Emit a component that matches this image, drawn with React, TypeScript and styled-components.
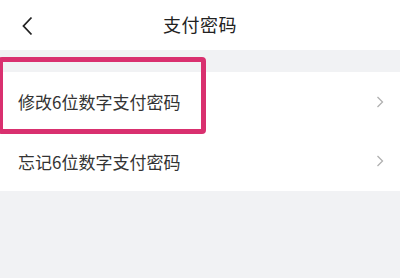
import React from "react";
import styled, { createGlobalStyle } from "styled-components";

const Global = createGlobalStyle`
  html, body { margin: 0; padding: 0; background: #f1f2f4; }
  body { font-family: "Noto Sans CJK SC", "Noto Sans", sans-serif; }
`;

const Page = styled.div`
  position: relative;
  width: 400px;
  height: 278px;
  background: #f1f2f4;
  overflow: hidden;
`;

const Header = styled.div`
  height: 50px;
  background: #fff;
  display: flex;
  align-items: center;
  justify-content: center;
  position: relative;
`;

const Back = styled.div`
  position: absolute;
  left: 22px;
  top: 16px;
  width: 11px;
  height: 20px;
  display: flex;
`;

const Title = styled.div`
  font-size: 18px;
  color: #222;
  letter-spacing: 0.5px;
  margin-top: -2px;
`;

const List = styled.div`
  margin-top: 22px;
  background: #fff;
  display: flex;
  flex-direction: column;
`;

const Row = styled.div`
  height: 59.5px;
  display: flex;
  align-items: center;
  justify-content: space-between;
  padding: 0 16px 0 18px;
`;

const Label = styled.span`
  font-size: 17px;
  color: #333;
`;

const Highlight = styled.div`
  position: absolute;
  left: -2px;
  top: 57px;
  width: 208px;
  height: 77px;
  box-sizing: border-box;
  border: 5px solid #d9306f;
  border-radius: 4px;
`;

const Chevron = () => (
  <svg width="8" height="12" viewBox="0 0 8 12">
    <path d="M1.5 1 L6.5 6 L1.5 11" fill="none" stroke="#b0b0b0" strokeWidth="1.3" />
  </svg>
);

export default function App() {
  return (
    <Page>
      <Global />
      <Header>
        <Back>
          <svg width="11" height="20" viewBox="0 0 11 20">
            <path d="M9.5 1.5 L1.5 10 L9.5 18.5" fill="none" stroke="#222" strokeWidth="1.8" />
          </svg>
        </Back>
        <Title>支付密码</Title>
      </Header>
      <List>
        <Row>
          <Label>修改6位数字支付密码</Label>
          <Chevron />
        </Row>
        <Row>
          <Label>忘记6位数字支付密码</Label>
          <Chevron />
        </Row>
      </List>
      <Highlight />
    </Page>
  );
}
